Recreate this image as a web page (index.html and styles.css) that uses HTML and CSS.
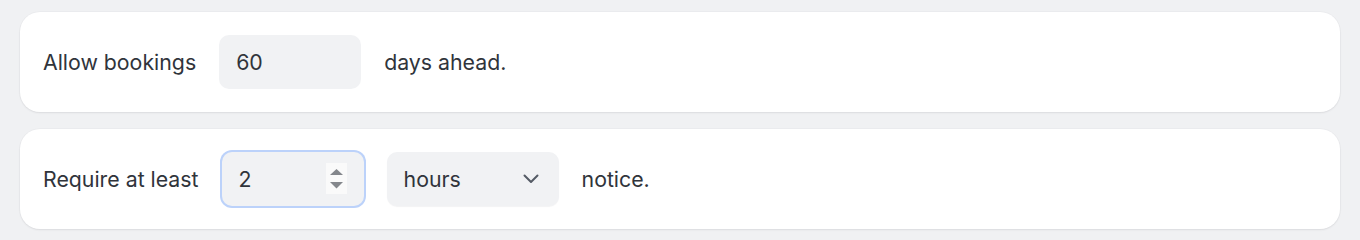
FILE: index.html
```html
<!DOCTYPE html>
<html lang="en">
<head>
<meta charset="utf-8">
<title>Booking rules</title>
<link rel="stylesheet" href="styles.css">
</head>
<body>
<main class="page">
  <section class="card">
    <span class="label">Allow bookings</span>
    <div class="field">
      <span class="field-value">60</span>
    </div>
    <span class="label">days ahead.</span>
  </section>
  <section class="card">
    <span class="label">Require at least</span>
    <div class="field field-focused">
      <span class="field-value">2</span>
      <span class="spinner">
        <svg width="21" height="31" viewBox="0 0 21 31" aria-hidden="true">
          <rect x="0" y="0" width="21" height="31" fill="#fafafa"/>
          <path d="M4 12 L10.5 6 L17 12 Z" fill="#84878c"/>
          <path d="M4 19 L10.5 25.5 L17 19 Z" fill="#84878c"/>
        </svg>
      </span>
    </div>
    <div class="select">
      <span class="field-value">hours</span>
      <svg class="chevron" width="16" height="10" viewBox="0 0 16 10" aria-hidden="true">
        <path d="M1.5 1.5 L8 8 L14.5 1.5" fill="none" stroke="#555b65" stroke-width="2" stroke-linecap="round" stroke-linejoin="round"/>
      </svg>
    </div>
    <span class="label">notice.</span>
  </section>
</main>
</body>
</html>
```
FILE: styles.css
```css
* { box-sizing: border-box; }
html, body { margin: 0; padding: 0; }
body {
  background: #f0f1f3;
  font-family: Inter, "Noto Sans", "Liberation Sans", sans-serif;
  color: #30343b;
  width: 1360px;
  height: 240px;
  overflow: hidden;
}
.page {
  padding: 12px 20px;
  display: flex;
  flex-direction: column;
  gap: 17px;
}
.card {
  background: #ffffff;
  border-radius: 20px;
  height: 100px;
  padding: 0 23px;
  display: flex;
  align-items: center;
  gap: 23px;
  box-shadow: 0 1px 2px rgba(20, 24, 32, 0.08), 0 0 0 1px rgba(20, 24, 32, 0.02);
}
.label {
  font-size: 21.3px;
  line-height: 26px;
  white-space: nowrap;
}
.field {
  width: 142px;
  height: 54px;
  background: #f1f2f4;
  border-radius: 10px;
  display: flex;
  align-items: center;
  padding: 0 17px;
  position: relative;
}
.field-focused {
  box-shadow: 0 0 0 2px #bcd2fa;
}
.field-value {
  font-size: 21.3px;
  line-height: 26px;
}
.spinner {
  position: absolute;
  right: 17px;
  top: 11px;
  display: block;
  width: 21px;
  height: 31px;
}
.spinner svg { display: block; }
.select {
  width: 172px;
  height: 54px;
  background: #f1f2f4;
  border-radius: 10px;
  display: flex;
  align-items: center;
  justify-content: space-between;
  padding: 0 20px 0 17px;
  box-shadow: 0 1px 1px rgba(20, 24, 32, 0.05);
}
.chevron { display: block; }
```
